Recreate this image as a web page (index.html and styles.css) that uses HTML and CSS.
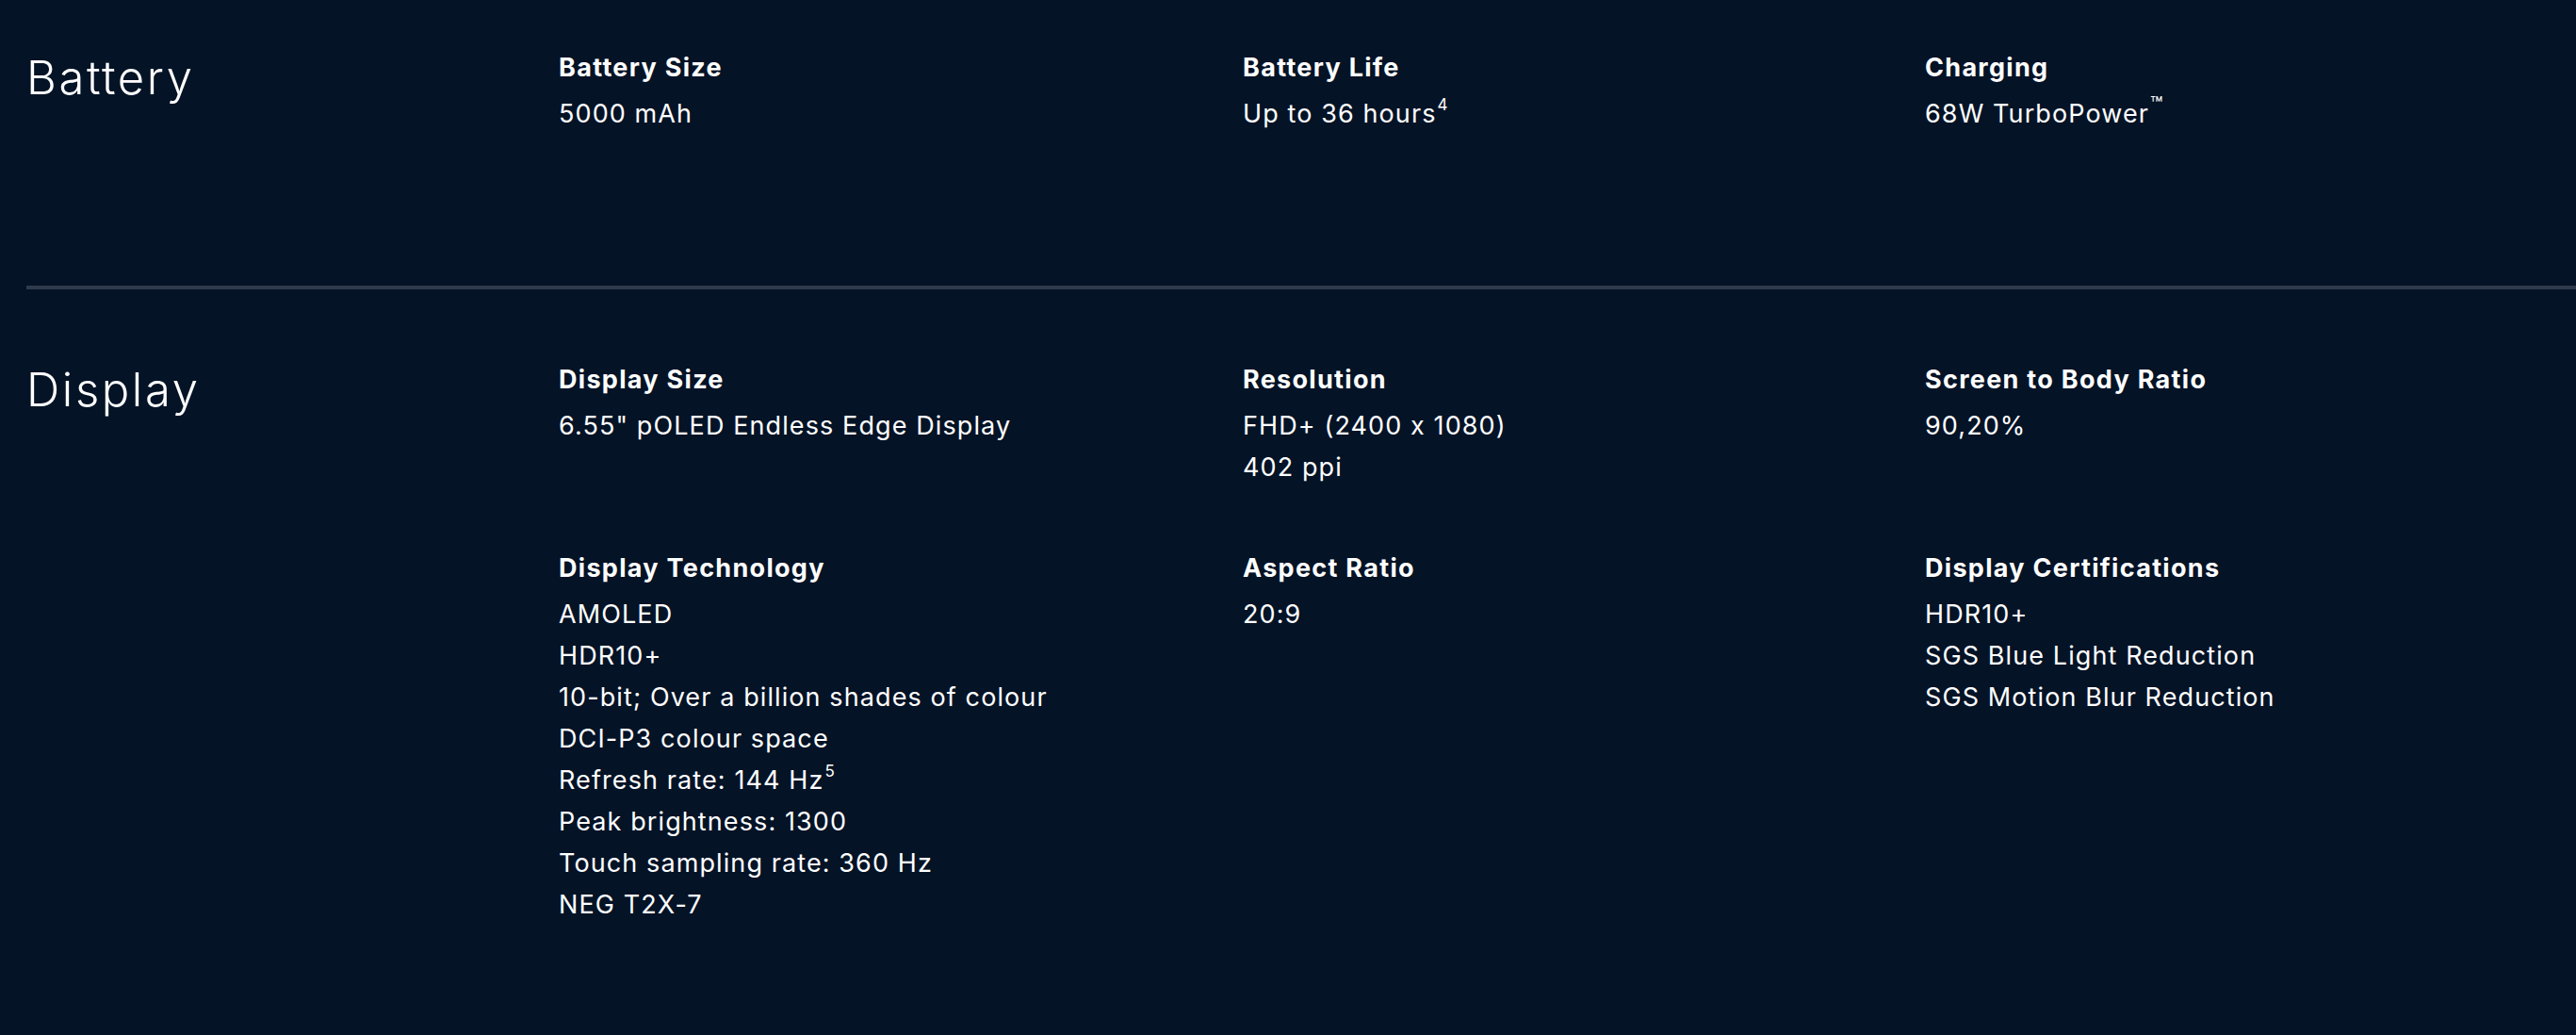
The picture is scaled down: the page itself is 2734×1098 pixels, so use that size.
FILE: index.html
```html
<!DOCTYPE html>
<html lang="en">
<head>
<meta charset="utf-8">
<title>Specs</title>
<link rel="stylesheet" href="styles.css">
</head>
<body>
<main class="specs">
  <section class="spec-section spec-section--first">
    <h2 class="spec-title">Battery</h2>
    <div class="spec-grid">
      <div class="spec-item">
        <h3 class="spec-label">Battery Size</h3>
        <p class="spec-value">5000 mAh</p>
      </div>
      <div class="spec-item">
        <h3 class="spec-label">Battery Life</h3>
        <p class="spec-value">Up to 36 hours<sup class="note">4</sup></p>
      </div>
      <div class="spec-item">
        <h3 class="spec-label">Charging</h3>
        <p class="spec-value">68W TurboPower<sup class="tm">™</sup></p>
      </div>
    </div>
  </section>
  <hr class="divider">
  <section class="spec-section spec-section--next">
    <h2 class="spec-title">Display</h2>
    <div class="spec-grid">
      <div class="spec-item">
        <h3 class="spec-label">Display Size</h3>
        <p class="spec-value">6.55" pOLED Endless Edge Display</p>
      </div>
      <div class="spec-item">
        <h3 class="spec-label">Resolution</h3>
        <p class="spec-value">FHD+ (2400 x 1080)</p>
        <p class="spec-value">402 ppi</p>
      </div>
      <div class="spec-item">
        <h3 class="spec-label">Screen to Body Ratio</h3>
        <p class="spec-value">90,20%</p>
      </div>
      <div class="spec-item">
        <h3 class="spec-label">Display Technology</h3>
        <p class="spec-value">AMOLED</p>
        <p class="spec-value">HDR10+</p>
        <p class="spec-value">10-bit; Over a billion shades of colour</p>
        <p class="spec-value">DCI-P3 colour space</p>
        <p class="spec-value">Refresh rate: 144 Hz<sup class="note">5</sup></p>
        <p class="spec-value">Peak brightness: 1300</p>
        <p class="spec-value">Touch sampling rate: 360 Hz</p>
        <p class="spec-value">NEG T2X-7</p>
      </div>
      <div class="spec-item">
        <h3 class="spec-label">Aspect Ratio</h3>
        <p class="spec-value">20:9</p>
      </div>
      <div class="spec-item">
        <h3 class="spec-label">Display Certifications</h3>
        <p class="spec-value">HDR10+</p>
        <p class="spec-value">SGS Blue Light Reduction</p>
        <p class="spec-value">SGS Motion Blur Reduction</p>
      </div>
    </div>
  </section>
</main>
</body>
</html>
```

FILE: styles.css
```css
html, body {
  margin: 0;
  padding: 0;
  background: #041326;
}

body {
  color: #ffffff;
  font-family: Inter, "Noto Sans", "Liberation Sans", sans-serif;
  overflow: hidden;
  height: 1098px;
}

.specs {
  padding-left: 28px;
}

.spec-section {
  display: flex;
  align-items: flex-start;
}

.spec-section--first {
  padding-top: 50px;
  padding-bottom: 160px;
}

.spec-section--next {
  padding-top: 74px;
}

.spec-title {
  flex: 0 0 565px;
  margin: 0;
  font-size: 49px;
  font-weight: 300;
  line-height: 66px;
  letter-spacing: 2.6px;
}

.spec-grid {
  flex: 0 0 auto;
  display: grid;
  grid-template-columns: 726px 724px 700px;
  row-gap: 63px;
}

.spec-item {
  display: flex;
  flex-direction: column;
}

.spec-label {
  margin: 0 0 5px;
  font-size: 27px;
  font-weight: 700;
  line-height: 44px;
  letter-spacing: 1.3px;
}

.spec-value {
  margin: 0;
  font-size: 27px;
  font-weight: 400;
  line-height: 44px;
  letter-spacing: 1.1px;
}

.spec-value sup {
  line-height: 0;
  position: relative;
  vertical-align: baseline;
}

.note {
  font-size: 17px;
  top: -0.75em;
  margin-left: 1px;
}

.tm {
  font-size: 22px;
  top: -0.55em;
  margin-left: 1px;
  letter-spacing: 0;
}

.divider {
  margin: 0;
  border: 0;
  height: 4px;
  background: #2f3b4c;
}
```
